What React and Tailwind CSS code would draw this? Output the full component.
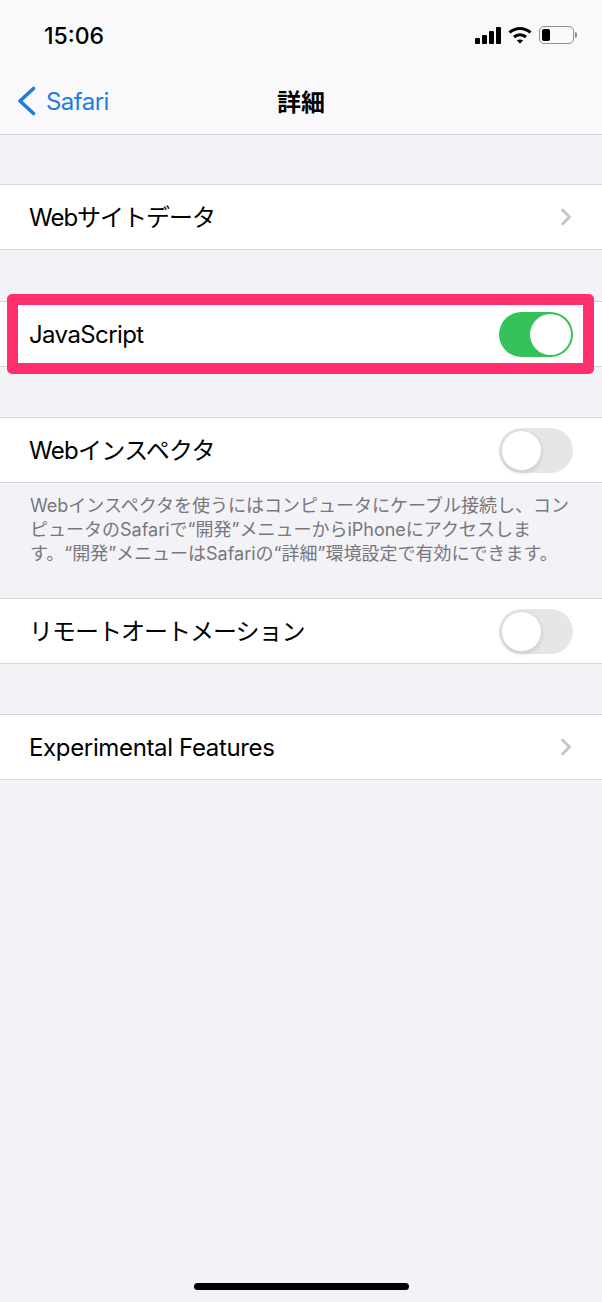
import React from 'react';
import { ChevronRight } from 'lucide-react';

const FONT = "font-['Inter','Noto_Sans_CJK_JP',sans-serif]";

function Toggle({ on }) {
    if (on) {
        return (
            <div className="w-[74px] h-[45px] rounded-full bg-[#35c25b] flex items-center justify-end pr-[2px] shrink-0">
                <div className="w-[41px] h-[41px] rounded-full bg-white"></div>
            </div>
        );
    }
    return (
        <div className="w-[74px] h-[45px] rounded-full bg-[#e6e6e8] flex items-center pl-[2px] shrink-0">
            <div className="w-[41px] h-[41px] rounded-full bg-white border border-[#d8d8da] shadow-[0_2px_4px_rgba(0,0,0,0.12)]"></div>
        </div>
    );
}

function Row({ label, right, className = '', labelClass = 'tracking-[-0.35px]' }) {
    return (
        <div className={`relative h-[66px] bg-white border-y border-[#d5d5d9] pl-[29px] pr-[29px] flex items-center justify-between ${className}`}>
            <span className={`text-[24px] text-black mt-[2px] ${labelClass}`}>{label}</span>
            {right}
        </div>
    );
}

const Chevron = <ChevronRight size={28} strokeWidth={2.4} className="text-[#c4c4c7] -mr-[7px]" />;

export default function App() {
    return (
        <div className={`relative w-[602px] h-[1302px] overflow-hidden bg-[#f2f2f7] flex flex-col ${FONT}`}>
            <div className="h-[135px] bg-[#f9f9fc] border-b border-[#d5d5d9] shrink-0 flex flex-col">
                <div className="h-[68px] pl-[44px] pr-[25px] pt-[22px] flex justify-between items-start">
                    <span className="text-[23px] leading-[28px] font-medium text-black">15:06</span>
                    <div className="flex items-center gap-[7px] mt-[4px]">
                        <svg width="26" height="17" viewBox="0 0 26 17" fill="#000">
                            <rect x="0" y="11" width="5" height="6" rx="1" />
                            <rect x="7" y="8" width="5" height="9" rx="1" />
                            <rect x="14" y="4" width="5" height="13" rx="1" />
                            <rect x="21" y="0" width="5" height="17" rx="1" />
                        </svg>
                        <svg width="24" height="18" viewBox="0 0 24 18" fill="none" stroke="#000" strokeWidth="3">
                            <path d="M1.5 6.5C7.5 1 16.500 1 22.500 6.500" />
                            <path d="M6 11C9.500 8 14.500 8 18 11" />
                            <path d="M12 17.500L8.800 14.500C10.500 13 13.500 13 15.200 14.500Z" fill="#000" stroke="none" />
                        </svg>
                        <div className="flex items-center gap-[1px]">
                            <div className="w-[35px] h-[18px] rounded-[5px] border-[1.5px] border-[#8e8e93] p-[2px]">
                                <div className="w-[8px] h-full rounded-[2px] bg-black"></div>
                            </div>
                            <div className="w-[2px] h-[6px] rounded-r-full bg-[#8e8e93]"></div>
                        </div>
                    </div>
                </div>
                <div className="relative flex-1 flex items-center justify-center">
                    <div className="absolute left-[17px] top-[19px] flex items-center gap-[9px] text-[#1c7ddb]">
                        <svg width="20" height="30" viewBox="0 0 20 30" fill="none" stroke="currentColor" strokeWidth="3.6" strokeLinecap="round" strokeLinejoin="round" className="shrink-0 -mt-[2px]">
                            <path d="M16.500 2.500L3 15L16.500 27.500" />
                        </svg>
                        <span className="text-[24px] leading-[30px] tracking-[-0.55px]">Safari</span>
                    </div>
                    <span className="text-[24px] font-bold text-black mt-[3px]">詳細</span>
                </div>
            </div>

            <Row className="mt-[49px]" label="Webサイトデータ" labelClass="tracking-[-1px]" right={Chevron} />

            <div className="relative mt-[51px]">
                <Row label="JavaScript" labelClass="tracking-[-0.6px]" right={<Toggle on />} />
                {/* annotation box on top of the row */}
                <div className="absolute left-[7px] right-[8px] -top-[7px] h-[80px] border-[11px] border-[#ff2f6e] rounded-[5px] pointer-events-none"></div>
            </div>

            <Row className="mt-[50px]" label="Webインスペクタ" labelClass="tracking-[-0.7px]" right={<Toggle />} />
            <p className="mt-[11px] pl-[30px] pr-[28px] text-[18px] leading-[24px] text-[#77777c]">
                Webインスペクタを使うにはコンピュータにケーブル接続し、コンピュータのSafariで“開発”メニューからiPhoneにアクセスします。“開発”メニューはSafariの“詳細”環境設定で有効にできます。
            </p>

            <Row className="mt-[32px]" label="リモートオートメーション" labelClass="tracking-[-1px]" right={<Toggle />} />
            <Row className="mt-[50px]" label="Experimental Features" right={Chevron} />

            <div className="absolute bottom-[12px] left-[194px] w-[215px] h-[7px] rounded-full bg-black"></div>
        </div>
    );
}
